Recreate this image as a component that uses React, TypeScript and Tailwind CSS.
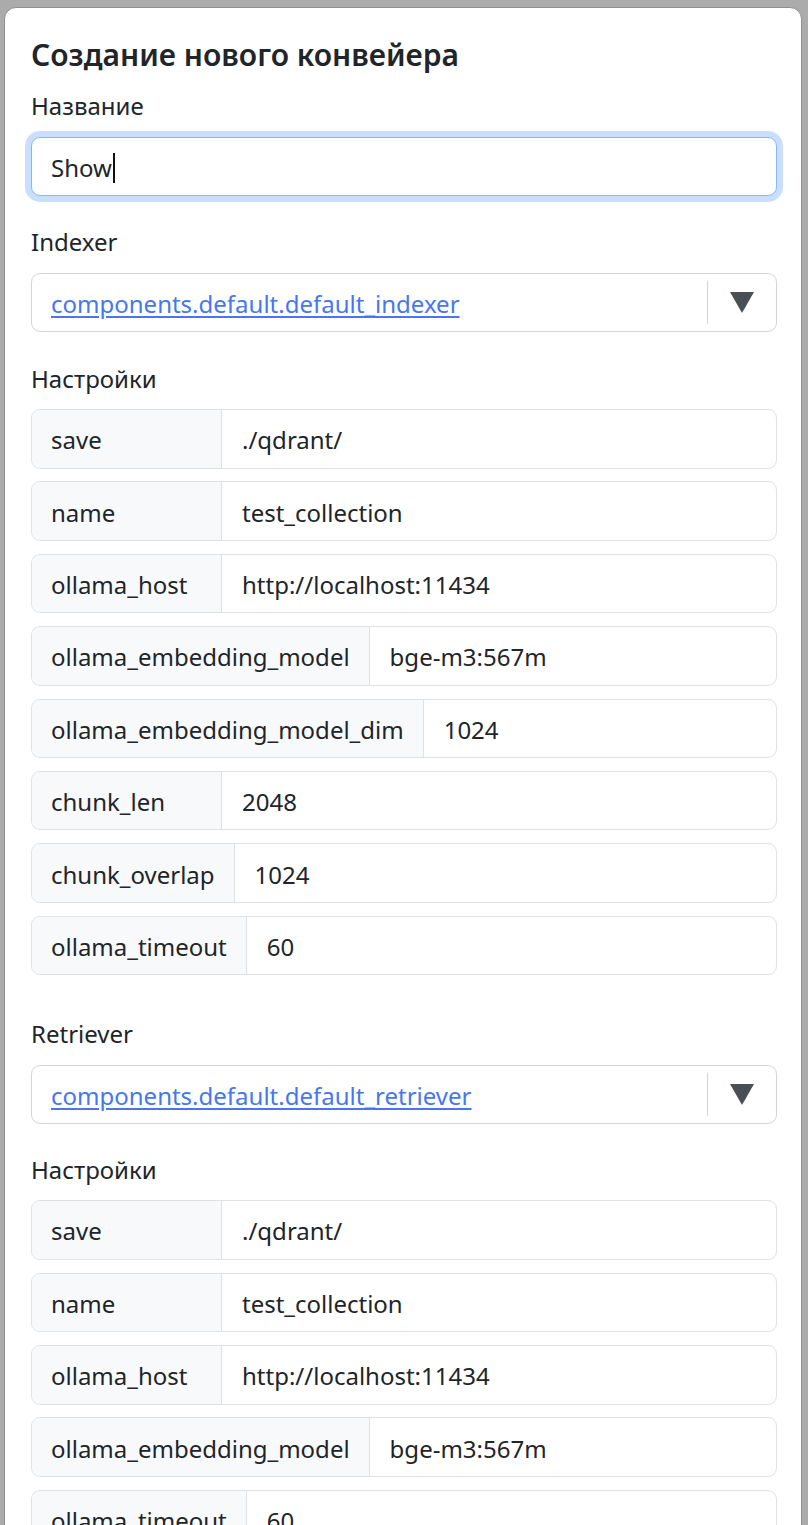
import * as React from "react"

type Setting = { key: string; value: string }

const indexerSettings: Setting[] = [
  { key: "save", value: "./qdrant/" },
  { key: "name", value: "test_collection" },
  { key: "ollama_host", value: "http://localhost:11434" },
  { key: "ollama_embedding_model", value: "bge-m3:567m" },
  { key: "ollama_embedding_model_dim", value: "1024" },
  { key: "chunk_len", value: "2048" },
  { key: "chunk_overlap", value: "1024" },
  { key: "ollama_timeout", value: "60" },
]

const retrieverSettings: Setting[] = [
  { key: "save", value: "./qdrant/" },
  { key: "name", value: "test_collection" },
  { key: "ollama_host", value: "http://localhost:11434" },
  { key: "ollama_embedding_model", value: "bge-m3:567m" },
  { key: "ollama_timeout", value: "60" },
]

const ComponentSelect = ({ value }: { value: string }) => (
  <div className="flex h-[59px] items-center rounded-[9px] border border-[#d1d5db] bg-white">
    <a className="flex-1 pl-[19px] pt-[2px] text-[#4677f0] underline underline-offset-[3px]">{value}</a>
    <div className="h-[43px] w-px bg-[#cfd2d6]" />
    <div className="flex w-[68px] items-center justify-center">
      <svg width="24" height="21" viewBox="0 0 24 21">
        <polygon points="0,0 24,0 12,21" fill="#4a4f55" />
      </svg>
    </div>
  </div>
)

const SettingsRows = ({ items }: { items: Setting[] }) => (
  <div className="flex flex-col gap-[12.9px]">
    {items.map((item) => (
      <div key={item.key} className="flex h-[59.5px] rounded-[9px] border border-[#dee2e6]">
        <div className="flex min-w-[190px] items-center rounded-l-[9px] border-r border-[#dee2e6] bg-[#f8f9fa] px-[19px] pt-[3px]">
          {item.key}
        </div>
        <div className="flex flex-1 items-center px-[20px] pt-[3px]">{item.value}</div>
      </div>
    ))}
  </div>
)

export default function App() {
  return (
    <div
      className="min-h-screen overflow-hidden bg-[#ababab] pt-[7px] text-[24px] leading-[1.5] text-[#212529]"
      style={{ fontFamily: '"Noto Sans", "Open Sans", sans-serif' }}
    >
      <div className="ml-[4px] w-[798px] rounded-t-[12px] border border-[#8f8f8f] bg-white pb-[40px] pl-[26px] pr-[24px] pt-[29px]">
        <h1 className="text-[30px] leading-[1.2] font-semibold">Создание нового конвейера</h1>

        <div className="mt-[15px] mb-[13px]">Название</div>
        <div className="flex h-[59px] items-center rounded-[9px] border border-[#86b7fe] bg-white pl-[19px] pt-[2px] shadow-[0_0_0_6px_rgba(13,110,253,0.22)]">
          <span>Show</span>
          <span className="ml-px h-[30px] w-[2px] bg-[#111]" />
        </div>

        <div className="mt-[28px] mb-[13px]">Indexer</div>
        <ComponentSelect value="components.default.default_indexer" />

        <div className="mt-[29px] mb-[12px]">Настройки</div>
        <SettingsRows items={indexerSettings} />

        <div className="mt-[41px] mb-[13px]">Retriever</div>
        <ComponentSelect value="components.default.default_retriever" />

        <div className="mt-[28px] mb-[12px]">Настройки</div>
        <SettingsRows items={retrieverSettings} />
      </div>
    </div>
  )
}
